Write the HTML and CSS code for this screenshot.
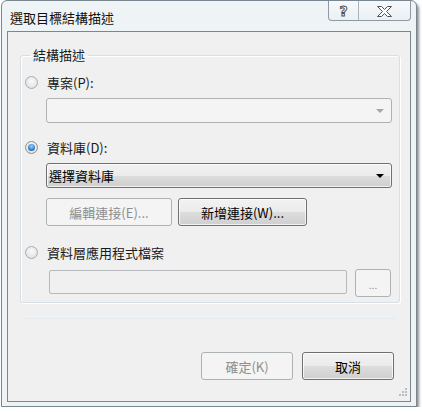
FILE: index.html
```html
<!DOCTYPE html>
<html>
<head>
  <title>選取目標結構描述</title>
  <link rel="stylesheet" href="styles.css">
</head>
<body>
  <div class="window">
    <div class="titlebar">
      <span class="title">選取目標結構描述</span>
      <div class="caption-buttons">
        <span class="cap-btn help">?</span>
        <span class="cap-btn close">
          <svg width="15" height="11" viewBox="0 0 15 11">
            <polygon points="0.5,0.5 4.5,0.5 7.5,3.5 10.5,0.5 14.5,0.5 9.5,5.5 14.5,10.5 10.5,10.5 7.5,7.5 4.5,10.5 0.5,10.5 5.5,5.5" fill="#fff" stroke="#505050" stroke-width="1" stroke-linejoin="round"/>
          </svg>
        </span>
      </div>
    </div>

    <div class="client">
      <fieldset class="group">
        <legend>結構描述</legend>

        <div class="option first">
          <span class="radio"></span>
          <span>專案(P):</span>
        </div>
        <div class="combo disabled indent"><span class="arrow"></span></div>

        <div class="option second">
          <span class="radio checked"></span>
          <span>資料庫(D):</span>
        </div>
        <div class="combo indent"><span class="combo-text">選擇資料庫</span><span class="arrow"></span></div>

        <div class="conn-buttons indent">
          <button class="btn edit-btn" disabled>編輯連接(E)...</button>
          <button class="btn new-btn">新增連接(W)...</button>
        </div>

        <div class="option third">
          <span class="radio"></span>
          <span>資料層應用程式檔案</span>
        </div>
        <div class="file-row indent">
          <div class="textbox"></div>
          <button class="btn browse-btn" disabled>...</button>
        </div>
      </fieldset>

      <div class="separator"></div>

      <div class="footer">
        <button class="btn dlg-btn" disabled>確定(K)</button>
        <button class="btn dlg-btn">取消</button>
      </div>

      <svg class="grip" width="10" height="10" viewBox="0 0 10 10">
        <rect x="8" y="0" width="2" height="2" fill="#b9bec2"/>
        <rect x="5" y="3" width="2" height="2" fill="#b9bec2"/>
        <rect x="8" y="3" width="2" height="2" fill="#b9bec2"/>
        <rect x="2" y="6" width="2" height="2" fill="#b9bec2"/>
        <rect x="5" y="6" width="2" height="2" fill="#b9bec2"/>
        <rect x="8" y="6" width="2" height="2" fill="#b9bec2"/>
      </svg>
    </div>
  </div>
</body>
</html>
```

FILE: styles.css
```css
body {
  margin: 0;
  background-color: #ffffff;
  font-family: "Noto Sans CJK TC", "Noto Sans", sans-serif;
  font-size: 13px;
  color: #1a1a1a;
}

.window {
  margin-left: 1px;
  width: 414px;
  height: 405px;
  border: 1px solid #7b8790;
  border-radius: 6px 6px 0 0;
  background-color: #eef3f6;
  box-shadow: 2px 3px 3px rgba(0, 0, 0, 0.45);
  display: flex;
  flex-direction: column;
}

/* title bar */
.titlebar {
  height: 30px;
  display: flex;
  align-items: flex-start;
}

.title {
  padding-left: 8px;
  padding-top: 9px;
  line-height: 16px;
  font-size: 13px;
  color: #111;
}

.caption-buttons {
  margin-left: auto;
  margin-right: 5px;
  display: flex;
  height: 19px;
  border: 1px solid #8d99a3;
  border-top: none;
  border-radius: 0 0 4px 4px;
  background: linear-gradient(#f6f9fb, #eaf0f4);
}

.cap-btn {
  display: flex;
  align-items: center;
  justify-content: center;
}

.help {
  width: 29px;
  border-right: 1px solid #a9b4bc;
  font-family: "DejaVu Sans", sans-serif;
  font-weight: bold;
  font-size: 14px;
  color: #fff;
  -webkit-text-stroke: 1px #505050;
  padding-top: 1px;
}

.close {
  width: 51px;
  padding-top: 1px;
}

/* client area */
.client {
  position: relative;
  margin: 0 5px 0 5px;
  height: 369px;
  border: 1px solid #7c868e;
  background-color: #f0f0f0;
}

.group {
  margin: 16px 10px 0 12px;
  padding: 0 7px 7px 4px;
  height: 246px;
  border: 1px solid #d5dfe5;
  border-radius: 3px;
  box-shadow: inset 1px 1px 0 #ffffff, 1px 1px 0 #ffffff;
}

.group legend {
  margin-left: 5px;
  padding: 0 3px;
  line-height: 14px;
  font-size: 13px;
}

.option {
  display: flex;
  align-items: center;
  height: 17px;
  gap: 9px;
}

.option.first {
  margin-top: 12px;
}

.option.second {
  margin-top: 16px;
}

.option.third {
  margin-top: 18px;
}

.indent {
  margin-left: 21px;
}

/* radio buttons */
.radio {
  width: 11px;
  height: 11px;
  border: 1px solid #a9acae;
  border-radius: 50%;
  background: radial-gradient(circle at 50% 40%, #fbfbfb 0%, #e4e4e4 70%, #d6d6d6 100%);
  position: relative;
}

.radio.checked {
  border-color: #8e8f8f;
}

.radio.checked::after {
  content: "";
  position: absolute;
  left: 2px;
  top: 2px;
  width: 7px;
  height: 7px;
  border-radius: 50%;
  background: radial-gradient(circle at 50% 35%, #9fd3fb 0%, #3b86d2 55%, #14498a 100%);
}

/* combo boxes */
.combo {
  margin-top: 7px;
  height: 23px;
  border: 1px solid #707070;
  border-radius: 3px;
  background: linear-gradient(#f2f2f2 0%, #ebebeb 50%, #dddddd 50%, #cfcfcf 100%);
  box-shadow: inset 0 0 0 1px rgba(255, 255, 255, 0.7);
  display: flex;
  align-items: center;
  padding: 0 7px 0 2px;
}

.combo.disabled {
  border-color: #adb2b5;
  background: #f4f4f4;
  box-shadow: none;
}

.combo-text {
  line-height: 16px;
  color: #000;
}

.arrow {
  margin-left: auto;
  width: 0;
  height: 0;
  border-left: 4px solid transparent;
  border-right: 4px solid transparent;
  border-top: 4px solid #000;
}

.combo.disabled .arrow {
  border-top-color: #a6a6a6;
}

/* push buttons */
.btn {
  font-family: "Noto Sans CJK TC", "Noto Sans", sans-serif;
  font-size: 13px;
  color: #000;
  height: 28px;
  border: 1px solid #707070;
  border-radius: 3px;
  background: linear-gradient(#f2f2f2 0%, #ebebeb 50%, #dddddd 50%, #cfcfcf 100%);
  box-shadow: inset 0 0 0 1px rgba(255, 255, 255, 0.75);
  padding: 0;
}

.btn:disabled {
  color: #8d8d8d;
  border-color: #adb2b5;
  background: #f4f4f4;
  box-shadow: none;
}

.conn-buttons {
  margin-top: 10px;
  display: flex;
  gap: 6px;
}

.edit-btn {
  width: 126px;
}

.new-btn {
  width: 129px;
}

.file-row {
  margin-top: 8px;
  display: flex;
  align-items: flex-start;
  gap: 8px;
  padding-left: 3px;
}

.textbox {
  margin-top: 1px;
  width: 296px;
  height: 22px;
  border: 1px solid #b5b9bc;
  border-radius: 2px;
  background: #f0f0f0;
}

.browse-btn {
  width: 36px;
  font-size: 10px;
  line-height: 10px;
  padding-top: 4px;
  color: #a9a9a9;
}

.separator {
  margin: 15px 13px 0 15px;
  height: 1px;
  background-color: #e4ebf1;
}

.footer {
  margin-top: 33px;
  display: flex;
  justify-content: flex-end;
  gap: 9px;
  padding-right: 16px;
}

.dlg-btn {
  width: 92px;
}

.grip {
  position: absolute;
  right: 3px;
  bottom: 3px;
}
```
